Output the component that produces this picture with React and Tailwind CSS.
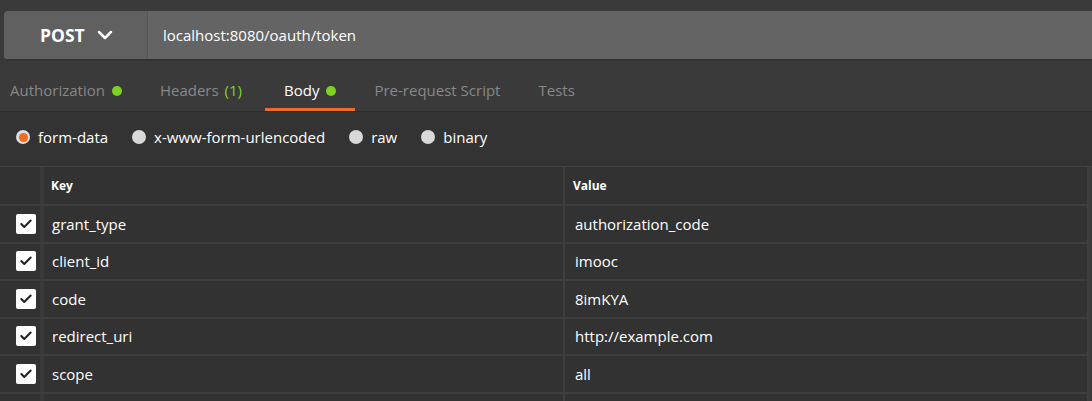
import { Check, ChevronDown } from 'lucide-react';

const tabs = [
  { label: 'Authorization', dot: true },
  { label: 'Headers', count: '(1)' },
  { label: 'Body', dot: true, active: true },
  { label: 'Pre-request Script' },
  { label: 'Tests' },
];

const modes = ['form-data', 'x-www-form-urlencoded', 'raw', 'binary'];

const params = [
  { key: 'grant_type', value: 'authorization_code' },
  { key: 'client_id', value: 'imooc' },
  { key: 'code', value: '8imKYA' },
  { key: 'redirect_uri', value: 'http://example.com' },
  { key: 'scope', value: 'all' },
];

const App = () => {
  return (
    <div className="w-[1092px] h-[401px] overflow-hidden bg-[#3a3a3a] text-[15px] font-['Open_Sans',sans-serif]">
      {/* URL bar */}
      <div className="pt-[11px] pl-[4px]">
        <div className="flex h-[50px] rounded-l-[4px] overflow-hidden border-b-2 border-[#333]">
          <div className="w-[144px] flex items-center pl-[36px] gap-[8px] bg-[#606060] border-r border-[#575757]">
            <span className="text-white font-bold text-[17.5px]">POST</span>
            <ChevronDown className="w-6 h-6 text-white" strokeWidth={2.5} />
          </div>
          <div className="flex-1 flex items-center pl-[15px] bg-[#646464] text-white">
            localhost:8080/oauth/token
          </div>
        </div>
      </div>

      {/* Tabs */}
      <div className="flex h-[51px] border-b border-[#2c2c2c] ml-[-9px]">
        {tabs.map((tab) => (
          <div
            key={tab.label}
            className={`relative flex items-center pt-[9px] px-[19px] ${tab.active ? 'text-white ml-[4px]' : 'text-[#888]'}`}
          >
            <span>{tab.label}</span>
            {tab.count && <span className="ml-[6px] text-[#7ed321]">{tab.count}</span>}
            {tab.dot && <span className="ml-[7px] w-[10px] h-[10px] rounded-full bg-[#7ed321]" />}
            {tab.active && <span className="absolute left-0 right-0 bottom-0 h-[3px] bg-[#f26b21]" />}
          </div>
        ))}
      </div>

      {/* Body modes */}
      <div className="bg-[#333] h-[55px] flex items-center pl-[16px] pb-[4px] gap-[24px] border-b border-[#424242]">
        {modes.map((mode, i) => (
          <label key={mode} className="flex items-center gap-[8px] text-white">
            {i === 0 ? (
              <span className="w-[14px] h-[14px] rounded-full bg-[#dedede] flex items-center justify-center">
                <span className="w-[9px] h-[9px] rounded-full bg-[#f26b21]" />
              </span>
            ) : (
              <span className="w-[14px] h-[14px] rounded-full bg-[#d9d9d9]" />
            )}
            <span>{mode}</span>
          </label>
        ))}
      </div>

      {/* Table */}
      <div className="bg-[#323232] w-[1089px] border-r-2 border-[#3e3e3e]">
        <div className="flex h-[39px] border-b-2 border-[#3e3e3e]">
          <div className="w-[44px] border-r-[4px] border-[#3a3a3a]" />
          <div className="w-[521px] flex items-center pl-[7px] text-white font-bold text-[12px] border-r-2 border-[#3e3e3e]">Key</div>
          <div className="flex-1 flex items-center pl-[8px] text-white font-bold text-[12px]">Value</div>
        </div>
        {params.map((p) => (
          <div key={p.key} className="flex h-[37.5px] border-b-2 border-[#3e3e3e]">
            <div className="w-[44px] flex items-center pl-[16px] border-r-[4px] border-[#3a3a3a]">
              <span className="w-[20px] h-[20px] rounded-[2px] bg-white flex items-center justify-center">
                <Check className="w-[14px] h-[14px] text-[#222]" strokeWidth={3.5} />
              </span>
            </div>
            <div className="w-[521px] flex items-center pl-[8px] text-white border-r-2 border-[#3e3e3e]">{p.key}</div>
            <div className="flex-1 flex items-center pl-[10px] text-white">{p.value}</div>
          </div>
        ))}
        <div className="flex h-[20px]">
          <div className="w-[44px] border-r-[4px] border-[#3a3a3a]" />
          <div className="w-[521px] border-r-2 border-[#3e3e3e]" />
        </div>
      </div>
    </div>
  );
};

export default App;
